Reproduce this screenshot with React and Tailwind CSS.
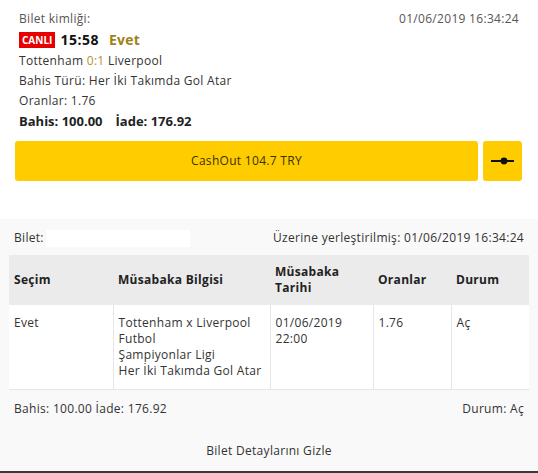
const rows = [
  {
    secim: "Evet",
    bilgi: ["Tottenham x Liverpool", "Futbol", "Şampiyonlar Ligi", "Her İki Takımda Gol Atar"],
    tarih: ["01/06/2019", "22:00"],
    oran: "1.76",
    durum: "Aç",
  },
];

const App = () => {
  return (
    <div className="w-[538px] h-[473px] bg-white text-[12px] tracking-[0.3px] text-[#333] font-['Open_Sans',sans-serif] overflow-hidden">
      {/* ticket summary */}
      <div className="h-[219px] pt-[9px]">
        <div className="px-[19px] leading-[20px]">
          <div className="flex justify-between text-[#555]">
            <span>Bilet kimliği:</span>
            <span>01/06/2019 16:34:24</span>
          </div>
          <div className="flex items-center h-[22px]">
            <span className="bg-[#e60000] text-white font-bold text-[10px] leading-[16px] h-[16px] px-[3px] tracking-[0px]">
              CANLI
            </span>
            <span className="ml-[5px] font-bold text-[14px] text-[#111] tracking-[0.5px]">15:58</span>
            <span className="ml-[10px] font-bold text-[14px] text-[#a08214]">Evet</span>
          </div>
          <div>
            Tottenham <span className="text-[#b0952a]">0:1</span> Liverpool
          </div>
          <div>Bahis Türü: Her İki Takımda Gol Atar</div>
          <div>Oranlar: 1.76</div>
          <div className="font-bold text-[13px] text-[#222] tracking-[0px]">
            Bahis: 100.00<span className="ml-[13px]">İade: 176.92</span>
          </div>
        </div>
        <div className="flex gap-[5px] pl-[15px] pr-[16px] mt-[10px]">
          <button className="flex-1 h-[40px] bg-[#ffcc00] rounded-[3px] text-[#3a3000] text-[12px]">
            CashOut 104.7 TRY
          </button>
          <button className="w-[39px] h-[40px] bg-[#ffcc00] rounded-[3px] flex items-center justify-center">
            <svg width="24" height="8" viewBox="0 0 24 8">
              <rect x="0" y="3" width="11" height="2" fill="#111" />
              <rect x="16" y="3" width="7" height="2" fill="#111" />
              <circle cx="13" cy="4" r="3.4" fill="#111" />
            </svg>
          </button>
        </div>
      </div>

      {/* ticket details */}
      <div className="h-[254px] bg-[#f9f9f9] border-b-2 border-[#3a3a3a] pt-[10px]">
        <div className="flex justify-between items-center px-[14px] h-[18px]">
          <div className="flex items-center">
            <span>Bilet:</span>
            <span className="ml-[2px] w-[144px] h-[17px] bg-white" />
          </div>
          <span>Üzerine yerleştirilmiş: 01/06/2019 16:34:24</span>
        </div>

        <table className="mt-[8px] ml-[9px] w-[520px] table-fixed border-collapse leading-[16px]">
          <colgroup>
            <col className="w-[104px]" />
            <col className="w-[157px]" />
            <col className="w-[103px]" />
            <col className="w-[78px]" />
            <col className="w-[78px]" />
          </colgroup>
          <thead>
            <tr className="bg-[#ebebeb] h-[50px] text-left text-[#222]">
              <th className="px-[5px] font-bold">Seçim</th>
              <th className="px-[5px] font-bold">Müsabaka Bilgisi</th>
              <th className="px-[5px] font-bold">Müsabaka Tarihi</th>
              <th className="px-[5px] font-bold">Oranlar</th>
              <th className="px-[5px] font-bold">Durum</th>
            </tr>
          </thead>
          <tbody>
            {rows.map((r, i) => (
              <tr key={i} className="bg-white align-top border-b border-[#e6e6e6]">
                <td className="px-[5px] pt-[10px] pb-[10px] border-r border-[#e6e6e6]">{r.secim}</td>
                <td className="px-[5px] pt-[10px] pb-[10px] border-r border-[#e6e6e6]">
                  {r.bilgi.map((l) => (
                    <div key={l}>{l}</div>
                  ))}
                </td>
                <td className="px-[5px] pt-[10px] pb-[10px] border-r border-[#e6e6e6]">
                  {r.tarih.map((l) => (
                    <div key={l}>{l}</div>
                  ))}
                </td>
                <td className="px-[5px] pt-[10px] pb-[10px] border-r border-[#e6e6e6]">{r.oran}</td>
                <td className="px-[5px] pt-[10px] pb-[10px]">{r.durum}</td>
              </tr>
            ))}
          </tbody>
        </table>

        <div className="flex justify-between px-[14px] mt-[10px] leading-[18px]">
          <span>Bahis: 100.00 İade: 176.92</span>
          <span>Durum: Aç</span>
        </div>
        <div className="text-center mt-[24px] leading-[18px]">Bilet Detaylarını Gizle</div>
      </div>
    </div>
  );
};

export default App;
